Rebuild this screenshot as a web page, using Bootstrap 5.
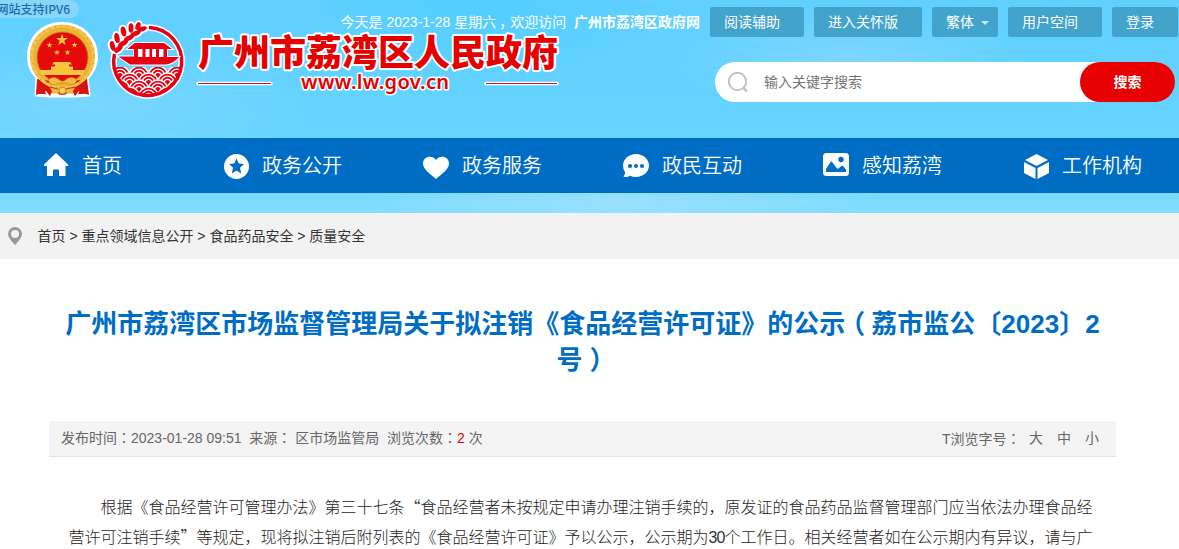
<!DOCTYPE html>
<html lang="zh-CN">
<head>
  <meta charset="UTF-8">
  <meta name="viewport" content="width=device-width, initial-scale=1.0">
  <title>广州市荔湾区人民政府</title>
  <link href="https://cdn.jsdelivr.net/npm/bootstrap@5.3.3/dist/css/bootstrap.min.css" rel="stylesheet">
  <style>
    body {
      font-family: "Liberation Sans", "Noto Sans CJK SC", sans-serif;
      font-size: 14px;
      color: #333;
      text-spacing-trim: space-all;
      overflow: hidden;
    }
    a { color: inherit; text-decoration: none; }
    .site-header {
      height: 213px;
      background:
        radial-gradient(ellipse 180px 90px at 480px 0, rgba(75,205,255,.7), transparent),
        radial-gradient(ellipse 240px 60px at 90px 105px, rgba(145,220,255,.45), transparent),
        radial-gradient(ellipse 260px 50px at 620px 205px, rgba(165,226,255,.7), transparent),
        radial-gradient(ellipse 180px 50px at 850px 60px, rgba(145,217,255,.6), transparent),
        linear-gradient(#60d0ff 0, #66d3ff 60%, #80ddff 100%);
    }
    .top-area { height: 138px; }
    .ipv6 {
      width: 79px;
      height: 18px;
      border-radius: 0 9px 9px 0;
      background: rgba(150,218,250,.75);
      color: #1b6cae;
      font: 500 12px/17px "Noto Sans CJK SC", sans-serif;
      direction: rtl;
      padding-right: 9px;
    }
    .tools { padding: 7px 1px 0 0; gap: 10px; color: #fff; }
    .welcome { line-height: 30px; white-space: pre; }
    .low-comma { padding-left: 3px; margin-right: -3px; }
    .tool-btn {
      height: 30px;
      line-height: 30px;
      padding: 0 0 0 14px;
      border-radius: 2px;
      background: #42a4cb;
      color: #fff;
      white-space: nowrap;
    }
    .w-66 { width: 66px; }
    .w-94 { width: 94px; }
    .w-108 { width: 108px; }
    .caret {
      display: inline-block;
      border: 4px solid transparent;
      border-top-color: #c9e9f6;
      border-bottom: 0;
      margin-left: 3px;
      vertical-align: 2px;
    }
    .logo { margin: -21px 0 0 20px; }
    .searchbar {
      width: 460px;
      height: 40px;
      margin: 25px 4px 0 0;
      border-radius: 20px;
      background: #fff;
      padding-left: 12px;
    }
    .searchbar input {
      border: 0;
      outline: 0;
      padding: 0;
      margin-left: 14px;
      background: transparent;
    }
    .searchbar input::placeholder { color: #757575; opacity: 1; }
    .search-btn {
      width: 95px;
      height: 40px;
      border: 0;
      border-radius: 20px;
      background: #e60000;
      color: #fff;
      font-weight: 700;
    }
    .main-nav {
      height: 55px;
      padding-left: 43px;
      background: #006dc5;
      color: #fff;
      font: 350 20px "Noto Sans CJK SC", sans-serif;
    }
    .main-nav a { width: 200px; flex: none; gap: 13px; }
    .main-nav a:first-child { width: 180px; }
    .main-nav span { position: relative; top: -1px; }
    .crumbs { height: 46px; background: #f2f2f2; padding-left: 7px; }
    .crumbs span { margin-left: 14.5px; }
    .article { width: 1067px; margin-left: 49px; }
    .article h1 {
      height: 72px;
      margin: 47px 0 0;
      padding: 0 12px;
      text-align: center;
      color: #006dc5;
      font-size: 26px;
      font-weight: 700;
      line-height: 36px;
    }
    .mid { font-family: "Noto Sans CJK TC", sans-serif; line-height: 1; }
    .paren-open { margin: 0 6px 0 -6px; }
    .paren-close { margin: 0 -7px 0 7px; }
    .meta {
      height: 36px;
      margin-top: 43px;
      padding: 0 17px 0 12px;
      background: #f4f4f4;
      border-bottom: 1px solid #e2e2e2;
      color: #666;
      white-space: pre;
    }
    .hits { color: #e60000; }
    .sizes { gap: 14px; }
    .sizes span { line-height: 21px; }
    .sizes > span { margin-right: -5.5px; }
    .content {
      margin: 34px 20px 0 19.5px;
      width: 1030px;
      font: 300 16px/30px "Noto Sans CJK SC", sans-serif;
      text-indent: 2em;
      color: #1c1c1c;
    }
    .content span { font-family: "Liberation Sans", sans-serif; line-height: 1; letter-spacing: -.9px; color: #333; }
  </style>
</head>
<body>
  <header class="site-header">
    <div class="top-area">
      <div class="d-flex justify-content-between align-items-start">
        <div class="ipv6 overflow-hidden text-nowrap">网站支持IPV6</div>
        <div class="tools d-flex">
          <div class="welcome">今天是 2023-1-28 星期六<span class="low-comma">，</span>欢迎访问  <b>广州市荔湾区政府网</b></div>
          <a class="tool-btn w-94" href="#">阅读辅助</a>
          <a class="tool-btn w-108" href="#">进入关怀版</a>
          <a class="tool-btn w-66" href="#">繁体 <i class="caret"></i></a>
          <a class="tool-btn w-94" href="#">用户空间</a>
          <a class="tool-btn w-66" href="#">登录</a>
        </div>
      </div>
      <div class="d-flex justify-content-between align-items-start">
        <svg class="logo" width="550" height="90" viewBox="20 16 550 90">
          <defs>
            <g id="wave">
              <circle r="10" fill="#e60012" stroke="#fff" stroke-width="1.4"/>
              <circle r="6.8" fill="none" stroke="#fff" stroke-width="1.3"/>
              <circle r="3.6" fill="none" stroke="#fff" stroke-width="1.3"/>
            </g>
            <clipPath id="pond"><path d="M113 67H183V97H113Z"/></clipPath>
            <clipPath id="disc"><circle cx="148.500" cy="60.500" r="34"/></clipPath>
            <path id="star" d="M0-6 1.500-2H6L2.300.8 3.700 5 0 2.400-3.700 5-2.300.8-6-2H-1.500Z"/>
            <!-- branch leaves, used once as white backing and once in red -->
            <g id="leaves">
              <ellipse cx="112.500" cy="46" rx="2.500" ry="5" transform="rotate(-14 112.500 46)"/>
              <ellipse cx="117" cy="38" rx="2.600" ry="5" transform="rotate(-12 117 38)"/>
              <ellipse cx="123.500" cy="31.500" rx="2.600" ry="5" transform="rotate(-14 123.500 31.500)"/>
              <ellipse cx="131" cy="28" rx="2.500" ry="4.800" transform="rotate(0 131 28)"/>
              <ellipse cx="138" cy="26" rx="2.400" ry="4" transform="rotate(22 138 26)"/>
              <ellipse cx="118.500" cy="49" rx="2.500" ry="5" transform="rotate(50 118.500 49)"/>
              <ellipse cx="123" cy="43.500" rx="2.500" ry="5.500" transform="rotate(62 123 43.500)"/>
              <ellipse cx="129" cy="38" rx="2.500" ry="5.500" transform="rotate(66 129 38)"/>
              <ellipse cx="135.500" cy="33.500" rx="2.500" ry="5.500" transform="rotate(70 135.500 33.500)"/>
              <ellipse cx="142" cy="29" rx="2.300" ry="5" transform="rotate(72 142 29)"/>
            </g>
          </defs>

          <!-- national emblem -->
          <g stroke="#fff" stroke-width="3" stroke-linejoin="round">
            <path d="M37 78 36 95 49 96H75L89 95 87 78Z" fill="#d71313"/>
            <path d="M62 23.500C82 23.500 96.500 38 96.500 56C96.500 67 91 76 82 82L76 95H48L43 82C33 76 28.500 67 28.500 56C28.500 38 42 23.500 62 23.500Z" fill="#e9b436"/>
          </g>
          <path d="M37 79 36 95 46 91 50 96 56 82ZM87 79 89 95 79 91 75 96 68 82Z" fill="#d71313"/>
          <circle cx="62.500" cy="57" r="31" fill="none" stroke="#f3c64b" stroke-width="3"/>
          <circle cx="62.500" cy="57" r="31" fill="none" stroke="#d99b25" stroke-width="1.500" stroke-dasharray="1 5"/>
          <circle cx="62.500" cy="57.500" r="25.500" fill="#e60b0b" stroke="#c88520" stroke-width=".8"/>
          <g fill="#f7c53f">
            <use href="#star" transform="translate(62 40)"/>
            <use href="#star" transform="translate(49.500 45) scale(.5)"/>
            <use href="#star" transform="translate(74.500 45) scale(.5)"/>
            <use href="#star" transform="translate(57 52.500) scale(.5)"/>
            <use href="#star" transform="translate(67.500 52.500) scale(.5)"/>
            <path d="M54 62H70L72 64.500H69V66.500H73V70H51V66.500H55V64.500H52ZM40 70H84.500L83 75H41.500Z"/>
          </g>
          <path d="M49 79Q55 75 61 81H64Q70 75 76 79Q78 84 70 85L67 83H58L55 85Q47 84 49 79Z" fill="#f0bd3f" stroke="#c98a20" stroke-width=".6"/>
          <path d="M50 87 58 89Q62 84 66 89L75 87Q74 94 66 92H59Q51 94 50 87Z" fill="#efbc3e"/>
          <path d="M50 87 58 89M75 87 66 89M58 93Q62 96 67 93" fill="none" stroke="#cf321b" stroke-width="1.200"/>
          <circle cx="62.500" cy="90.500" r="3.500" fill="#f7cf55" stroke="#b97918" stroke-width=".8"/>

          <!-- city mark: boat, waves and a branch -->
          <path d="M149 27.500A34 34 0 1 1 114.500 54" fill="none" stroke="#fff" stroke-width="6.500" stroke-linecap="round"/>
          <use href="#leaves" fill="#fff" stroke="#fff" stroke-width="4"/>
          <g clip-path="url(#pond)"><g clip-path="url(#disc)">
            <use href="#wave" x="120" y="76"/><use href="#wave" x="139" y="76"/><use href="#wave" x="158" y="76"/><use href="#wave" x="177" y="76"/>
            <use href="#wave" x="129.500" y="83"/><use href="#wave" x="148.500" y="83"/><use href="#wave" x="167.500" y="83"/>
            <use href="#wave" x="120" y="90"/><use href="#wave" x="139" y="90"/><use href="#wave" x="158" y="90"/><use href="#wave" x="177" y="90"/>
            <use href="#wave" x="129.500" y="97"/><use href="#wave" x="148.500" y="97"/><use href="#wave" x="167.500" y="97"/>
          </g></g>
          <path d="M149 27.500A34 34 0 1 1 114.500 54" fill="none" stroke="#e60012" stroke-width="3.500"/>
          <use href="#leaves" fill="#e60012"/>
          <path d="M134.500 43H164L172 49H167V57L179 57Q173 64 166 64.500H130L118.500 56.500H134V49H127.500Z" fill="#e60012" stroke="#fff" stroke-width="2" paint-order="stroke"/>
          <path d="M138 49H142.500V57H138ZM145.500 49H149.500V57H145.500ZM152 49H156V57H152ZM159 49H163.500V57H159Z" fill="#fff"/>

          <g fill="#e60000" stroke="#fff" stroke-linejoin="round" paint-order="stroke">
            <text x="198" y="65.500" font-family="Noto Sans CJK SC, sans-serif" font-size="36" font-weight="900" textLength="360" stroke-width="4">广州市荔湾区人民政府</text>
            <text x="301" y="89" font-family="Noto Sans, sans-serif" font-size="20" font-weight="600" textLength="148" stroke-width="3">www.lw.gov.cn</text>
          </g>
          <path d="M198 83.500H271M486 83.500H557" stroke="#fff" stroke-width="3.500" stroke-linecap="round"/>
          <path d="M198 83.500H271M486 83.500H557" stroke="#d01018" stroke-width="1"/>
        </svg>
        <form class="searchbar d-flex align-items-center">
          <svg width="23" height="23" fill="none" stroke="#c2c2c2" stroke-width="2">
            <circle cx="10.500" cy="10.500" r="8.700"/>
            <path d="M16.500 17 20 20.500" stroke-width="2.500"/>
          </svg>
          <input class="flex-fill" type="text" placeholder="输入关键字搜索">
          <button class="search-btn" type="button">搜索</button>
        </form>
      </div>
    </div>
    <nav class="main-nav d-flex align-items-center">
      <a class="d-flex align-items-center" href="#">
        <svg width="26" height="26" fill="#fff"><path d="M13 0 1 11.500Q.5 13 2 13H4V23H10V17.500Q10 16.500 11 16.500H15Q16 16.500 16 17.500V23H22.500V13H25Q26 13 25 11.500Z"/></svg>
        <span>首页</span>
      </a>
      <a class="d-flex align-items-center" href="#">
        <svg width="26" height="26"><circle cx="13.500" cy="13.500" r="12.500" fill="#fff"/><path d="M13.500 5.500 15.800 10.500 21 11 17 14.800 18.200 20.500 13.500 17.500 8.800 20.500 10 14.800 6 11 11.200 10.500Z" fill="#006dc5"/></svg>
        <span>政务公开</span>
      </a>
      <a class="d-flex align-items-center" href="#">
        <svg width="26" height="26" fill="#fff"><path d="M13 26C10 23 0 17 0 10.500C0 4 8.500 1 13 7C17.500 1 26 4 26 10.500C26 17 16 23 13 26Z"/></svg>
        <span>政务服务</span>
      </a>
      <a class="d-flex align-items-center" href="#">
        <svg width="26" height="26"><path d="M13 1C20 1 26 6 26 12.500C26 19 20 24 13 24Q9.500 24 7 22.800Q4 24.500 .5 23.800Q2.500 21.500 2 19Q0 16.500 0 12.500C0 6 6 1 13 1Z" fill="#fff"/><g fill="#006dc5"><circle cx="7" cy="13" r="2.100"/><circle cx="13" cy="13" r="2.100"/><circle cx="19" cy="13" r="2.100"/></g></svg>
        <span>政民互动</span>
      </a>
      <a class="d-flex align-items-center" href="#">
        <svg width="26" height="26"><rect y="0" width="26" height="23" rx="3.500" fill="#fff"/><path d="M3 19V16L7.500 9Q8.500 8 9.500 9.500L14 15.500Q15 16 16 15L18.500 13Q19.500 12.500 20.500 13.500L23 16.500V19Z" fill="#006dc5"/><circle cx="18" cy="6.500" r="2.700" fill="#006dc5"/></svg>
        <span>感知荔湾</span>
      </a>
      <a class="d-flex align-items-center" href="#">
        <svg width="26" height="26" fill="#fff"><path d="M13.500 1 25 7 13.500 13 2 7ZM1 9 12.500 15V26L1 20ZM26 9 14.500 15V26L26 20Z"/></svg>
        <span>工作机构</span>
      </a>
    </nav>
  </header>

  <div class="crumbs d-flex align-items-center">
    <svg width="16" height="20"><path d="M8 1A7 7 0 0 1 15 8C15 11.500 11 15.500 8 19C5 15.500 1 11.500 1 8A7 7 0 0 1 8 1ZM8 4A4 4 0 1 0 8 12A4 4 0 1 0 8 4Z" fill="#999" fill-rule="evenodd"/></svg>
    <span>首页 &gt; 重点领域信息公开 &gt; 食品药品安全 &gt; 质量安全</span>
  </div>

  <main class="article">
    <h1>广州市荔湾区市场监督管理局关于拟注销《食品经营许可证》的公示<span class="paren-open">（</span>荔市监公〔2023〕2号<span class="paren-close">）</span></h1>
    <div class="meta d-flex justify-content-between align-items-center">
      <div>发布时间<span class="mid" lang="zh-Hant">：</span>2023-01-28 09:51  来源<span class="mid" lang="zh-Hant">：</span> 区市场监管局  浏览次数<span class="mid" lang="zh-Hant">：</span><span class="hits">2</span> 次</div>
      <div class="sizes d-flex"><span>T浏览字号<span class="mid" lang="zh-Hant">：</span></span><a href="#">大</a><a href="#">中</a><a href="#">小</a></div>
    </div>
    <p class="content">根据《食品经营许可管理办法》第三十七条“食品经营者未按规定申请办理注销手续的，原发证的食品药品监督管理部门应当依法办理食品经营许可注销手续”等规定，现将拟注销后附列表的《食品经营许可证》予以公示，公示期为<span>30</span>个工作日。相关经营者如在公示期内有异议，请与广</p>
  </main>
</body>
</html>
